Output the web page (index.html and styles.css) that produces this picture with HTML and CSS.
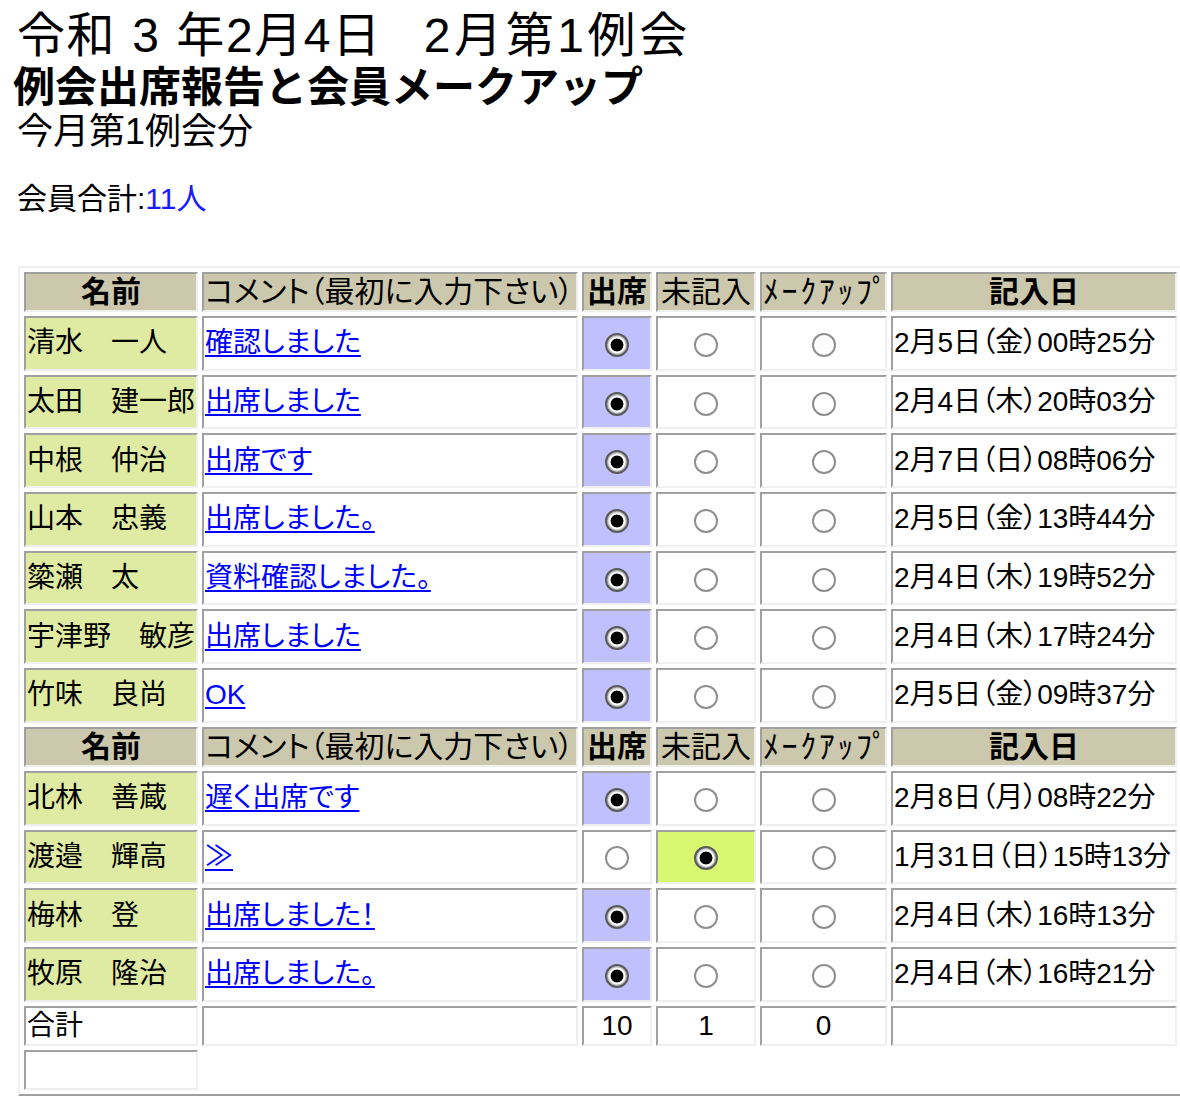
FILE: index.html
```html
<!DOCTYPE html>
<html lang="ja">
<head>
<meta charset="utf-8">
<title>例会出席報告と会員メークアップ</title>
<link rel="stylesheet" href="styles.css">
</head>
<body>
<h1 class="meeting-title"><span class="date-part">令和 3 年2月4日</span><span class="meeting-part">2月第1例会</span></h1>
<h2 class="report-title">例会出席報告と会員メークアップ</h2>
<p class="subtitle">今月第1例会分</p>
<p class="member-total">会員合計:<span class="count">11人</span></p>

<table class="attendance">
  <tr class="head-row">
    <th class="h-name">名前</th>
    <th class="h-comment">コメント（最初に入力下さい）</th>
    <th class="h-present">出席</th>
    <th class="h-blank">未記入</th>
    <th class="h-makeup">ﾒｰｸｱｯﾌﾟ</th>
    <th class="h-date">記入日</th>
  </tr>
  <tr class="row">
    <td class="name">清水　一人</td>
    <td class="comment"><a href="#">確認しました</a></td>
    <td class="opt on-present"><span class="radio is-on"></span></td>
    <td class="opt"><span class="radio"></span></td>
    <td class="opt"><span class="radio"></span></td>
    <td class="date">2月5日（金）00時25分</td>
  </tr>
  <tr class="row">
    <td class="name">太田　建一郎</td>
    <td class="comment"><a href="#">出席しました</a></td>
    <td class="opt on-present"><span class="radio is-on"></span></td>
    <td class="opt"><span class="radio"></span></td>
    <td class="opt"><span class="radio"></span></td>
    <td class="date">2月4日（木）20時03分</td>
  </tr>
  <tr class="row">
    <td class="name">中根　仲治</td>
    <td class="comment"><a href="#">出席です</a></td>
    <td class="opt on-present"><span class="radio is-on"></span></td>
    <td class="opt"><span class="radio"></span></td>
    <td class="opt"><span class="radio"></span></td>
    <td class="date">2月7日（日）08時06分</td>
  </tr>
  <tr class="row">
    <td class="name">山本　忠義</td>
    <td class="comment"><a href="#">出席しました。</a></td>
    <td class="opt on-present"><span class="radio is-on"></span></td>
    <td class="opt"><span class="radio"></span></td>
    <td class="opt"><span class="radio"></span></td>
    <td class="date">2月5日（金）13時44分</td>
  </tr>
  <tr class="row">
    <td class="name">簗瀬　太</td>
    <td class="comment"><a href="#">資料確認しました。</a></td>
    <td class="opt on-present"><span class="radio is-on"></span></td>
    <td class="opt"><span class="radio"></span></td>
    <td class="opt"><span class="radio"></span></td>
    <td class="date">2月4日（木）19時52分</td>
  </tr>
  <tr class="row">
    <td class="name">宇津野　敏彦</td>
    <td class="comment"><a href="#">出席しました</a></td>
    <td class="opt on-present"><span class="radio is-on"></span></td>
    <td class="opt"><span class="radio"></span></td>
    <td class="opt"><span class="radio"></span></td>
    <td class="date">2月4日（木）17時24分</td>
  </tr>
  <tr class="row">
    <td class="name">竹味　良尚</td>
    <td class="comment"><a href="#">OK</a></td>
    <td class="opt on-present"><span class="radio is-on"></span></td>
    <td class="opt"><span class="radio"></span></td>
    <td class="opt"><span class="radio"></span></td>
    <td class="date">2月5日（金）09時37分</td>
  </tr>
  <tr class="head-row">
    <th class="h-name">名前</th>
    <th class="h-comment">コメント（最初に入力下さい）</th>
    <th class="h-present">出席</th>
    <th class="h-blank">未記入</th>
    <th class="h-makeup">ﾒｰｸｱｯﾌﾟ</th>
    <th class="h-date">記入日</th>
  </tr>
  <tr class="row">
    <td class="name">北林　善蔵</td>
    <td class="comment"><a href="#">遅く出席です</a></td>
    <td class="opt on-present"><span class="radio is-on"></span></td>
    <td class="opt"><span class="radio"></span></td>
    <td class="opt"><span class="radio"></span></td>
    <td class="date">2月8日（月）08時22分</td>
  </tr>
  <tr class="row">
    <td class="name">渡邉　輝高</td>
    <td class="comment"><a href="#">≫</a></td>
    <td class="opt"><span class="radio"></span></td>
    <td class="opt on-blank"><span class="radio is-on"></span></td>
    <td class="opt"><span class="radio"></span></td>
    <td class="date">1月31日（日）15時13分</td>
  </tr>
  <tr class="row">
    <td class="name">梅林　登</td>
    <td class="comment"><a href="#">出席しました！</a></td>
    <td class="opt on-present"><span class="radio is-on"></span></td>
    <td class="opt"><span class="radio"></span></td>
    <td class="opt"><span class="radio"></span></td>
    <td class="date">2月4日（木）16時13分</td>
  </tr>
  <tr class="row">
    <td class="name">牧原　隆治</td>
    <td class="comment"><a href="#">出席しました。</a></td>
    <td class="opt on-present"><span class="radio is-on"></span></td>
    <td class="opt"><span class="radio"></span></td>
    <td class="opt"><span class="radio"></span></td>
    <td class="date">2月4日（木）16時21分</td>
  </tr>
  <tr class="total-row">
    <td class="total-label">合計</td>
    <td></td>
    <td class="num">10</td>
    <td class="num">1</td>
    <td class="num">0</td>
    <td></td>
  </tr>
  <tr class="empty-row">
    <td></td>
  </tr>
</table>
</body>
</html>
```

FILE: styles.css
```css
html {
  overflow: hidden;
}

body {
  margin: 0;
  padding: 10px 0 0 0;
  background: #ffffff;
  color: #000000;
  font-family: "Liberation Sans", "Noto Sans CJK JP", sans-serif;
}

.meeting-title {
  margin: 0 0 0 17px;
  font-size: 48px;
  line-height: 52px;
  font-weight: normal;
  letter-spacing: 1.6px;
  word-spacing: 1px;
  white-space: pre;
}

.meeting-part {
  margin-left: 42px;
  letter-spacing: 3.6px;
}

.report-title {
  margin: 4px 0 0 13px;
  font-size: 42px;
  line-height: 44px;
  font-weight: bold;
}

.subtitle {
  margin: 2px 0 0 17px;
  font-size: 36px;
  line-height: 40px;
}

.member-total {
  margin: 30px 0 0 17px;
  font-size: 30px;
  line-height: 34px;
}

.count {
  color: #1a1aff;
}

.attendance {
  margin: 50px 0 0 18px;
  width: 1165px;
  table-layout: fixed;
  border-collapse: separate;
  border-spacing: 4px;
  border-style: solid;
  border-width: 2px;
  border-color: #efefef #a0a0a0 #a0a0a0 #efefef;
}

.attendance th,
.attendance td {
  box-sizing: border-box;
  border-style: solid;
  border-width: 2px;
  border-color: #a0a0a0 #efefef #efefef #a0a0a0;
  padding: 0 1px;
  white-space: nowrap;
}

.attendance th {
  height: 40px;
  background: #ccc8ae;
  font-size: 30px;
  line-height: 34px;
  font-weight: bold;
}

.attendance .h-name { width: 174px; text-align: center; }
.attendance .h-comment { width: 376px; text-align: left; }
.attendance .h-present { width: 70px; text-align: center; }
.attendance .h-blank { width: 100px; text-align: center; }
.attendance .h-makeup { width: 127px; text-align: left; }
.attendance .h-date { width: 286px; text-align: center; }

.attendance .h-comment {
  font-weight: normal;
  font-feature-settings: "palt";
}

.attendance .h-blank {
  font-weight: normal;
}

.attendance .h-makeup {
  font-weight: normal;
  font-size: 32px;
  letter-spacing: 2.6px;
  padding-left: 1px;
}

.row td {
  height: 54.7px;
  font-size: 28px;
  line-height: 32px;
}

.name {
  background: #dfeba2;
}

.comment a {
  color: #0000ff;
  text-decoration: underline;
  text-decoration-thickness: 2px;
  text-underline-offset: 3px;
  font-feature-settings: "palt";
}

.opt {
  text-align: center;
  vertical-align: middle;
}

.on-present {
  background: #c0c0ff;
}

.on-blank {
  background: #d8f872;
}

.date {
  font-feature-settings: "palt";
}

.radio {
  display: inline-block;
  box-sizing: border-box;
  width: 24px;
  height: 24px;
  border-radius: 50%;
  border: 2px solid #8f8f8f;
  background: #ffffff;
  vertical-align: middle;
}

.radio.is-on {
  border-color: #5a5a5a;
  background: radial-gradient(circle, #000000 0 6px, #ffffff 6.8px 8px, #b8b8b8 9px);
}

.total-row td,
.empty-row td {
  height: 40px;
  font-size: 28px;
  line-height: 32px;
}

.num {
  text-align: center;
}
```
